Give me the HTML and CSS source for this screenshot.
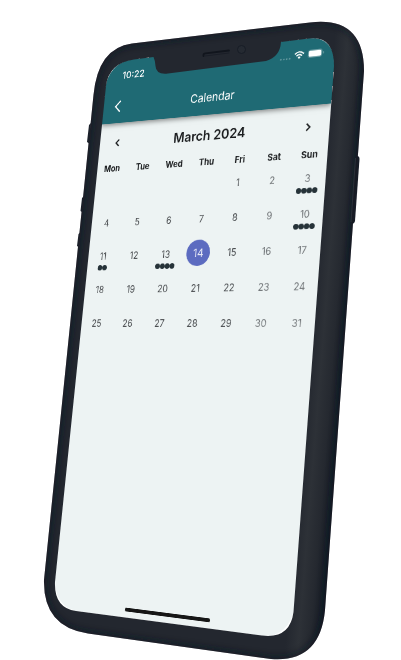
FILE: index.html
```html
<!DOCTYPE html>
<html lang="en">
<head>
<meta charset="utf-8">
<meta name="viewport" content="width=device-width, initial-scale=1">
<title>Calendar</title>
<link rel="stylesheet" href="styles.css">
</head>
<body>
<main class="device">
  <div class="screen">
    <header class="top">
      <div class="status">
        <span class="time">10:22</span>
        <span class="signals">
          <svg class="cell" viewBox="0 0 17 12" aria-hidden="true"><g fill="#fff" opacity=".3"><circle cx="2" cy="10" r="1.3"/><circle cx="6.500" cy="10" r="1.300"/><circle cx="11" cy="10" r="1.300"/><circle cx="15.500" cy="10" r="1.300"/></g></svg>
          <svg class="wifi" viewBox="0 0 16 12" aria-hidden="true"><g fill="none" stroke="#fff" stroke-width="2"><path d="M1 4.500Q8-2 15 4.500"/><path d="M3.700 7.300Q8 3.300 12.300 7.300"/></g><path d="M5.600 9.200Q8 7.200 10.400 9.200L8 11.800Z" fill="#fff"/></svg>
          <svg class="battery" viewBox="0 0 25 12" aria-hidden="true"><rect x=".5" y=".5" width="21" height="11" rx="3" fill="none" stroke="#fff" opacity=".25"/><rect x="1.500" y="1.500" width="19" height="9" rx="2" fill="#fff"/><path d="M23 4v4q1.500-.5 1.500-2T23 4Z" fill="#fff" opacity=".3"/></svg>
        </span>
      </div>
      <div class="appbar">
        <button class="back" type="button" aria-label="Back"><svg viewBox="0 0 12 20" aria-hidden="true"><path d="M10.500 1.500 2 10l8.500 8.500" fill="none" stroke="#fff" stroke-width="2.200"/></svg></button>
        <h1>Calendar</h1>
      </div>
    </header>
    <nav class="month">
      <button type="button" aria-label="Previous month"><svg viewBox="0 0 8 12" aria-hidden="true"><path d="M6.500 1 1.500 6l5 5" fill="none" stroke="#1b1d1f" stroke-width="2.200"/></svg></button>
      <h2>March 2024</h2>
      <button type="button" aria-label="Next month"><svg viewBox="0 0 8 12" aria-hidden="true"><path d="m1.500 1 5 5-5 5" fill="none" stroke="#1b1d1f" stroke-width="2.200"/></svg></button>
    </nav>
    <table class="days">
      <thead><tr><th>Mon</th><th>Tue</th><th>Wed</th><th>Thu</th><th>Fri</th><th>Sat</th><th>Sun</th></tr></thead>
      <tbody>
        <tr><td></td><td></td><td></td><td></td><td><span class="day">1</span></td><td><span class="day">2</span></td><td><span class="day">3</span><span class="events"><i></i><i></i><i></i><i></i></span></td></tr>
        <tr><td><span class="day">4</span></td><td><span class="day">5</span></td><td><span class="day">6</span></td><td><span class="day">7</span></td><td><span class="day">8</span></td><td><span class="day">9</span></td><td><span class="day">10</span><span class="events"><i></i><i></i><i></i><i></i></span></td></tr>
        <tr><td><span class="day">11</span><span class="events"><i></i><i></i></span></td><td><span class="day">12</span></td><td><span class="day">13</span><span class="events"><i></i><i></i><i></i><i></i></span></td><td><span class="day today">14</span></td><td><span class="day">15</span></td><td><span class="day">16</span></td><td><span class="day">17</span></td></tr>
        <tr><td><span class="day">18</span></td><td><span class="day">19</span></td><td><span class="day">20</span></td><td><span class="day">21</span></td><td><span class="day">22</span></td><td><span class="day">23</span></td><td><span class="day">24</span></td></tr>
        <tr><td><span class="day">25</span></td><td><span class="day">26</span></td><td><span class="day">27</span></td><td><span class="day">28</span></td><td><span class="day">29</span></td><td><span class="day">30</span></td><td><span class="day">31</span></td></tr>
      </tbody>
    </table>
    <div class="home"></div>
  </div>
  <svg class="frame" viewBox="0 0 401 660" aria-hidden="true">
    <defs>
      <linearGradient id="side" gradientUnits="userSpaceOnUse" x1="310" y1="340" x2="347" y2="343">
        <stop offset="0" stop-color="#23272f"/><stop offset=".35" stop-color="#2d3137"/><stop offset=".65" stop-color="#252930"/><stop offset="1" stop-color="#141a24"/>
      </linearGradient>
      <filter id="soft" x="-10%" y="-10%" width="120%" height="120%"><feGaussianBlur stdDeviation="3"/></filter>
      <clipPath id="shell"><path d="M132 43.500L310 22.500Q364 16 364 71L325 610Q320 663 271 659L88 633.500Q43 627 44 580L93.500 95Q98 48 132 43.500Z"/></clipPath>
    </defs>
    <path d="M357 156q2.500 0 2.500 3l-4.500 62q-.5 3-4 3Z" fill="#171c26"/>
    <path d="M91 123l-2 2-2 17 3 2ZM84 196l-2 2-1.500 13 3 2ZM81 232l-2.500 2-1.500 12 3 2Z" fill="#1b202a"/>
    <path fill="url(#side)" fill-rule="evenodd" d="M132 43.500L310 22.500Q364 16 364 71L325 610Q320 663 271 659L88 633.500Q43 627 44 580L93.500 95Q98 48 132 43.500Z
      M153.500 57L134 59.500Q109 63 106 86L55 582Q54 608 76 611L262 635.500Q290 639 293.500 612L334 66Q334 35 309 38.500L281 42Q280 57 266 61L168 73.500Q156 75 155.500 66Q155 60 153.500 57Z"/>
    <g clip-path="url(#shell)"><path d="M132 43.500L310 22.500Q364 16 364 71L325 610Q320 663 271 659L88 633.500Q43 627 44 580L93.500 95Q98 48 132 43.500Z" fill="none" stroke="#111823" stroke-width="5" opacity=".7" filter="url(#soft)"/></g>
    <path d="M355.500 158L351 222" stroke="#2b3038" stroke-width="1"/>
    <path d="M203.500 56v-1q0-1.500 2-1.700L229 50.500" fill="none" stroke="#11151d" stroke-width="1.800" stroke-linecap="round"/>
    <path d="M205 56L229 53" stroke="#1a1e27" stroke-width="1" stroke-linecap="round"/>
    <circle cx="241.500" cy="49.500" r="4" fill="#252a32" stroke="#181d26"/>
  </svg>
</main>
</body>
</html>
```
FILE: styles.css
```css
* { box-sizing: border-box; }
body { margin: 0; background: #fff; font-family: Inter, "Liberation Sans", sans-serif; color: #1b1d1f; }
h1, h2 { margin: 0; }
button { display: grid; place-items: center; padding: 0; border: 0; background: none; }

.device { position: relative; min-height: 100vh; overflow: hidden; }
.frame { position: absolute; top: 0; left: 0; width: 401px; pointer-events: none; }

/* The flat phone screen, projected onto the tilted device. */
.screen {
  position: absolute; top: 0; left: 0;
  display: flex; flex-direction: column;
  width: 375px; height: 812px;
  border-radius: 40px; overflow: hidden;
  background: #edf3f3;
  transform-origin: 0 0;
  transform: matrix3d(0.52381, -0.08192, 0, -0.00025269, -0.072562, 0.62408, 0, -0.00007793, 0, 0, 1, 0, 108, 62.4, 0, 1);
}

.top { background: #1f6a74; color: #fff; box-shadow: 0 2px 8px rgba(0, 0, 0, .5); }
.status { display: flex; justify-content: space-between; align-items: center; height: 46px; padding: 0 16px 0 29px; }
.time { font-size: 15px; font-weight: 500; }
.signals { display: flex; align-items: center; gap: 5px; }
.signals svg { height: 12px; }
.cell { width: 17px; }
.wifi { width: 16px; }
.battery { width: 25px; }
.appbar { display: grid; grid-template-columns: 52px 1fr 52px; align-items: center; height: 52px; }
.back { height: 52px; }
.back svg { width: 12px; height: 20px; }
h1 { font-size: 17px; font-weight: 400; text-align: center; }

.month { display: grid; grid-template-columns: 64px 1fr 64px; align-items: center; height: 62px; }
.month button { height: 48px; }
.month svg { width: 8px; height: 12px; }
h2 { font-size: 20px; font-weight: 600; text-align: center; }

.days { width: 100%; table-layout: fixed; border-collapse: collapse; text-align: center; }
th { height: 16px; padding: 0; font-size: 13px; line-height: 16px; font-weight: 700; }
td { position: relative; height: 50px; padding: 0; font-size: 14px; color: #4a4d50; }
td:nth-child(n+6) { color: #73777a; }
.day { display: inline-grid; place-items: center; width: 38px; height: 38px; border-radius: 50%; vertical-align: middle; }
.today { background: #5c6bc0; color: #e8eaf6; font-size: 16px; }
.events { position: absolute; left: 0; right: 0; bottom: 3px; display: flex; justify-content: center; }
.events i { width: 8px; height: 8px; border-radius: 50%; background: #263238; }

.home { width: 134px; height: 5px; margin: auto auto 8px; border-radius: 3px; background: #161616; }
```
